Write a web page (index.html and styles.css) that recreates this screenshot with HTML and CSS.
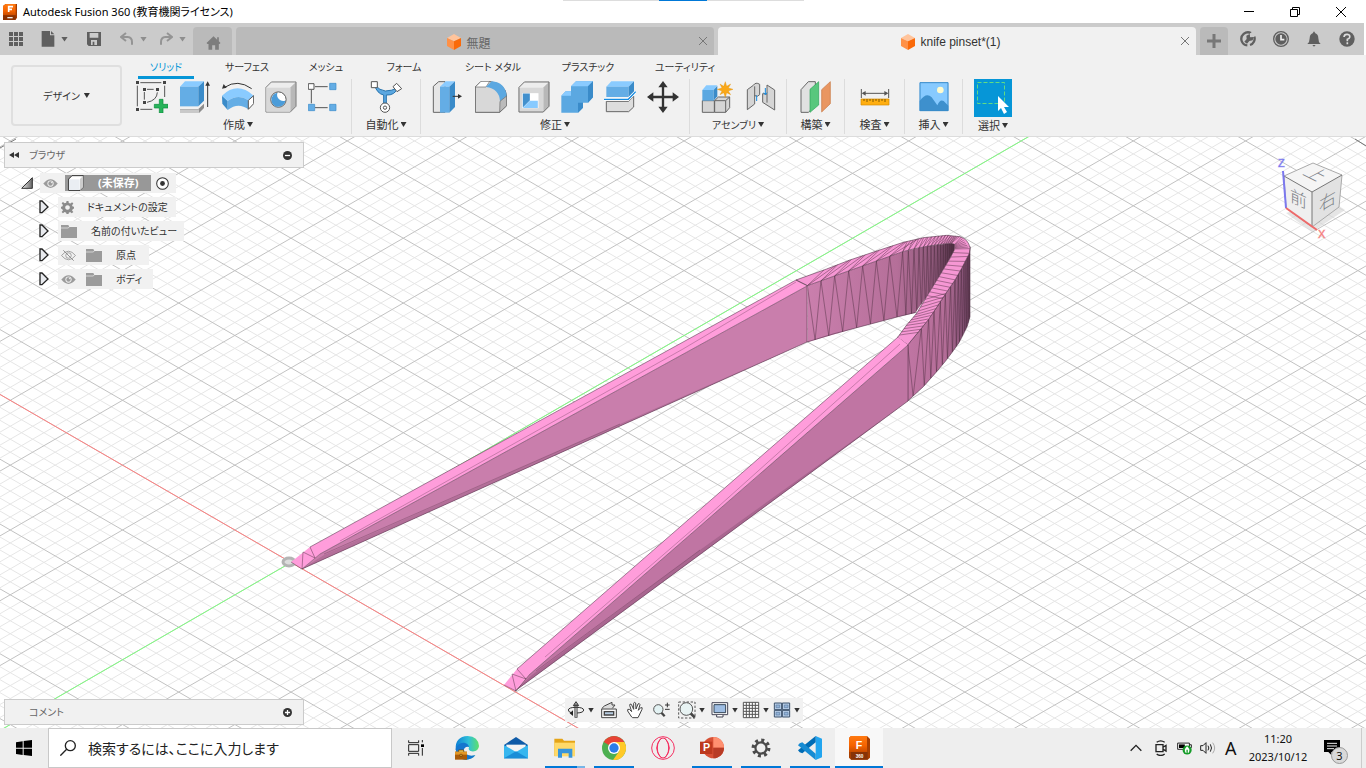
FILE: index.html
```html
<!DOCTYPE html>
<html lang="ja">
<head>
<meta charset="utf-8">
<title>Autodesk Fusion 360</title>
<link rel="stylesheet" href="styles.css">
</head>
<body>
<svg class="defs" aria-hidden="true">
  <defs>
    <linearGradient id="fusion" x1="0" y1="0" x2="0" y2="1"><stop offset="0" stop-color="#ff7a12"/><stop offset=".6" stop-color="#f56300"/><stop offset="1" stop-color="#c84c00"/></linearGradient>
    <linearGradient id="tri" x1="0" y1="0" x2="1" y2="0"><stop offset="0" stop-color="#eee"/><stop offset="1" stop-color="#666"/></linearGradient>
    <linearGradient id="edge" x1="0" y1="0" x2="1" y2="0"><stop offset="0" stop-color="#0c7fd6"/><stop offset=".55" stop-color="#2fc0d8"/><stop offset="1" stop-color="#5fe06a"/></linearGradient>
    <symbol id="doc-cube" viewBox="0 0 42 48"><path d="M21 0 42 12 21 22 0 12Z" fill="#ffc49c"/><path d="M0 12 21 22V48L0 36Z" fill="#ff9147"/><path d="M42 12 21 22V48L42 36Z" fill="#fa6a0a"/></symbol>
    <symbol id="eye" viewBox="0 0 48 30"><path d="M1 15Q24-13 47 15Q24 43 1 15Z" fill="#9b9b9b"/><circle cx="24" cy="15" r="10" fill="#f1f1f1"/><circle cx="24" cy="15" r="7" fill="#9b9b9b"/><circle cx="27" cy="12" r="2" fill="#f1f1f1"/></symbol>
    <symbol id="folder" viewBox="0 0 48 39"><path d="M0 0H22L25 6H48V39H0Z" fill="#9b9b9b"/><path d="M0 9H22L26 4H48" fill="none" stroke="#f1f1f1" stroke-width="2"/></symbol>
    <symbol id="expand" viewBox="0 0 30 40"><path d="M3 2H9L27 20 9 37H3Z" fill="#e8eaee" stroke="#222" stroke-width="4"/></symbol>
    <symbol id="gear" viewBox="0 0 40 40"><path d="M17 0h6l1 6 5 2 5-4 4 4-4 5 2 4 5 1v5l-5 2-2 4 4 5-5 4-5-4-4 2-1 5h-6l-1-5-5-2-5 4-4-4 4-5-2-4-5-2v-5l5-1 2-5-4-5 4-4 5 4 5-2ZM20 13a7 7 0 1 0 .1 0Z" fill="#8b8b8b" fill-rule="evenodd"/></symbol>
  </defs>
</svg>

<header class="titlebar">
  <svg class="applogo" viewBox="0 0 42 48"><path d="M0 6 8 0H42V42L36 48H0Z" fill="#a33b00"/><path d="M8 0H38V34H0V6Z" fill="url(#fusion)"/><path d="M0 34H38V48H0Z" fill="#8b3100"/><path d="M17 24V8H30M17 16H27" fill="none" stroke="#fff" stroke-width="5"/><path d="M13 41H29" stroke="#eee" stroke-width="4"/></svg>
  <h1>Autodesk Fusion 360 (教育機関ライセンス)</h1>
  <div class="grip"></div>
  <div class="wincontrols">
    <button aria-label="最小化"><svg viewBox="0 0 12 12"><path d="M1 5.5H11"/></svg></button>
    <button aria-label="元に戻す"><svg viewBox="0 0 12 12"><path d="M1.500 3.500H8.500V10.500H1.500ZM3.500 3.500V1.500H10.500V8.500H8.500"/></svg></button>
    <button aria-label="閉じる"><svg viewBox="0 0 12 12"><path d="M1 1 11 11M11 1 1 11"/></svg></button>
  </div>
</header>

<div class="tabbar">
  <div class="quick">
    <button class="q-grid" aria-label="データパネル"><svg viewBox="0 0 42 42"><path d="M0 0h12v12H0zM15 0h12v12H15zM30 0h12v12H30zM0 15h12v12H0zM15 15h12v12H15zM30 15h12v12H30zM0 30h12v12H0zM15 30h12v12H15zM30 30h12v12H30z"/></svg></button>
    <button class="q-file" aria-label="ファイル"><svg viewBox="0 0 42 48"><path d="M2 0H27V13H40V47H2ZM30 0 40 10H30Z"/></svg><i class="caret"></i></button>
    <button class="q-save" aria-label="保存"><svg viewBox="0 0 42 42"><path fill-rule="evenodd" d="M0 0H42V42H5L0 37ZM8 3V17H34V3ZM12 24V39H30V24ZM17 29H22V39H17Z"/></svg></button>
    <button class="q-undo dim" aria-label="元に戻す"><svg viewBox="0 0 42 42"><path d="M18 3 3 15 18 27M4 15H23Q36 16 36 30V38" fill="none" stroke="#949494" stroke-width="6"/></svg><i class="caret"></i></button>
    <button class="q-redo dim" aria-label="やり直し"><svg viewBox="0 0 42 42"><path d="M24 3 39 15 24 27M38 15H19Q6 16 6 30V38" fill="none" stroke="#949494" stroke-width="6"/></svg><i class="caret"></i></button>
  </div>
  <button class="hometab" aria-label="ホーム"><svg viewBox="0 0 42 42"><path fill="#7d7d7d" d="M21 1 32 11V4H37V16L42 21 39 24H37V41H26V28H17V41H6V24H3L0 21Z"/></svg></button>
  <div class="doctab"><button class="doctitle"><svg class="cube"><use href="#doc-cube"/></svg>無題</button><button class="x" aria-label="閉じる"><svg viewBox="0 0 10 10"><path d="M1 1 9 9M9 1 1 9"/></svg></button></div>
  <div class="doctab active"><button class="doctitle"><svg class="cube"><use href="#doc-cube"/></svg>knife pinset*(1)</button><button class="x" aria-label="閉じる"><svg viewBox="0 0 10 10"><path d="M1 1 9 9M9 1 1 9"/></svg></button></div>
  <button class="newtab" aria-label="新規"><svg viewBox="0 0 14 14"><path d="M7 0V14M0 7H14" stroke="#777" stroke-width="3"/></svg></button>
  <div class="status">
    <button aria-label="拡張機能"><svg viewBox="0 0 48 48"><path d="M33 6A20 20 0 0 0 5 30Q9 42 22 43M43 17A20 20 0 0 1 30 42" fill="none" stroke="#5f5f5f" stroke-width="7"/><path d="M13 32 20 24 19 14 29 9 31 19 41 18 38 28 28 30 21 38" fill="#5f5f5f"/><path d="M30 6V18L42 18V8Z" fill="#cbcbcb"/></svg></button>
    <button aria-label="ジョブの状態"><svg viewBox="0 0 48 48"><circle cx="24" cy="24" r="22" fill="none" stroke="#5f5f5f" stroke-width="4"/><circle cx="24" cy="24" r="17" fill="#5f5f5f"/><path d="M24 12V26H34" fill="none" stroke="#eee" stroke-width="5"/></svg></button>
    <button aria-label="通知"><svg viewBox="0 0 48 48"><path d="M24 1 28 7Q37 10 37 22 37 34 44 39H4Q11 34 11 22 11 10 20 7ZM19 42H29L24 47Z" fill="#5f5f5f"/></svg></button>
    <button aria-label="ヘルプ"><svg viewBox="0 0 48 48"><circle cx="24" cy="24" r="23" fill="#5f5f5f"/><path d="M15 18Q16 9 25 10 34 11 32 19 31 23 25 25V31M25 34V40" fill="none" stroke="#ddd" stroke-width="5"/></svg></button>
  </div>
</div>

<div class="ribbon">
  <button class="workspace">デザイン<i class="caret"></i></button>
  <div class="ribbonmain">
    <nav class="rtabs">
      <button class="on"><span>ソリッド</span></button><button>サーフェス</button><button>メッシュ</button><button>フォーム</button><button>シート メタル</button><button>プラスチック</button><button>ユーティリティ</button>
    </nav>
    <div class="groups">
      <section class="group g-create">
        <div class="tools">
          <button aria-label="スケッチを作成"><svg viewBox="411 246 96 96"><g fill="none" stroke="#555" stroke-width="3"><path d="M424 251H487M415 260V322M424 331H460M497 260V294M444 271H464M436 279V302M444 310Q474 304 475 280"/></g><path fill="#444" d="M411 246h9v9h-9zM492 246h9v9h-9zM411 327h9v9h-9zM432 267h9v9h-9zM471 267h9v9h-9zM432 306h9v9h-9z"/><path d="M481 301h11v15h15v11h-15v15h-11v-15h-15v-11h15z" fill="#27b35a" stroke="#078b3a" stroke-width="2"/></svg></button>
          <button aria-label="押し出し"><svg viewBox="540 246 96 96"><path d="M543 330H598L615 314V327L600 342H543Z" fill="#8d8d8d"/><path d="M543 331H600V342H543Z" fill="#c9c9c9"/><path d="M543 263 558 247H615L598 263Z" fill="#8acbff"/><path d="M543 263H598V322H543Z" fill="#64ade5"/><path d="M598 263 615 247V305L598 322Z" fill="#3a8bc9"/><path d="M626 324V255" stroke="#333" stroke-width="3"/><path d="M626 247 633 260H619Z" fill="#333"/></svg></button>
          <button aria-label="回転"><svg viewBox="669 246 96 96"><path d="M669 290 686 306V333L670 314Z" fill="#3a8bc9"/><path d="M669 290Q715 246 764 290L748 304Q718 283 686 306Z" fill="#8acbff"/><path d="M686 306Q718 283 748 304V331Q718 308 686 333Z" fill="#64ade5"/><path d="M748 304 764 290V314L748 331Z" fill="#fff" stroke="#555" stroke-width="3"/><path d="M677 265Q716 239 758 269" fill="none" stroke="#333" stroke-width="3"/><path d="M669 269 674 255 683 266Z" fill="#333"/></svg></button>
          <button aria-label="穴"><svg viewBox="796 244 100 100"><path d="M799 264 816 247H893V323L875 341H799Z" fill="#ededed"/><path d="M875 264 893 247V323L875 341Z" fill="#b8b8b8"/><path d="M799 264 816 247H893V323L875 341H799Z" fill="none" stroke="#777" stroke-width="3"/><path d="M800 265H875V340H800Z" fill="#d8d8d8"/><circle cx="838" cy="302" r="24" fill="#fff" stroke="#555" stroke-width="3"/><path d="M835 281A22 22 0 1 0 860 305 19 19 0 0 1 835 281Z" fill="#4b9cd9"/></svg></button>
          <button aria-label="パターン"><svg viewBox="927 246 96 96"><path d="M948 263H986M948 326H986M937 273V313" stroke="#555" stroke-width="3"/><path d="M928 254h17v17h-17z" fill="#fff" stroke="#555" stroke-width="3"/><path d="M992 253h19v19h-19zM992 316h19v19h-19zM928 316h19v19h-19z" fill="#64ade5" stroke="#3a8bc9" stroke-width="2"/></svg></button>
        </div>
        <button class="glabel">作成<i class="caret"></i></button>
      </section>
      <section class="group g-auto">
        <div class="tools"><button aria-label="自動化"><svg viewBox="1108 246 96 96"><path d="M1121 257Q1129 284 1149 288V318H1157V288Q1182 290 1192 266 1173 276 1154 276 1138 275 1121 257Z" fill="#5ba7e0" stroke="#2874ad" stroke-width="3"/><path d="M1112 248h18v18h-18zM1188 253l15 16-14 9-12-15z" fill="#fff" stroke="#555" stroke-width="3"/><circle cx="1153" cy="326" r="14" fill="#fff" stroke="#555" stroke-width="3"/><circle cx="1153" cy="326" r="5" fill="#fff" stroke="#555" stroke-width="3"/></svg></button></div>
        <button class="glabel">自動化<i class="caret"></i></button>
      </section>
      <section class="group g-modify">
        <div class="tools">
          <button aria-label="プレス/プル"><svg viewBox="36 246 96 96"><path d="M40 262 56 248H75V340H40Z" fill="#e6e6e6" stroke="#666" stroke-width="3"/><path d="M60 263 77 247H105L88 263Z" fill="#8acbff"/><path d="M60 263H88V341H60Z" fill="#64ade5"/><path d="M88 263 105 247V324L88 341Z" fill="#3a8bc9"/><path d="M98 292H118" stroke="#333" stroke-width="3"/><path d="M126 292 114 285V299Z" fill="#333"/></svg></button>
          <button aria-label="フィレット"><svg viewBox="165 246 96 96"><path d="M166 264 183 247H207Q258 254 260 292V320L239 340H166Z" fill="#d8d8d8" stroke="#666" stroke-width="3"/><path d="M166 264 183 247H209L198 264Z" fill="#fff" stroke="#666" stroke-width="2"/><path d="M198 264 215 247Q256 250 260 291L240 307Q238 269 198 264Z" fill="#5ba8e1"/><path d="M240 307 260 291V320L239 340Z" fill="#bbb" stroke="#666" stroke-width="2"/></svg></button>
          <button aria-label="シェル"><svg viewBox="292 244 100 100"><path d="M295 264 312 247H389V323L371 341H295Z" fill="#ededed"/><path d="M371 264 389 247V323L371 341Z" fill="#b8b8b8"/><path d="M296 265H371V340H296Z" fill="#d8d8d8"/><path d="M295 264 312 247H389V323L371 341H295Z" fill="none" stroke="#666" stroke-width="3"/><path d="M305 282H356V329H305Z" fill="#fff"/><path d="M307 283H329V305L307 327Z" fill="#4290cd"/><path d="M307 328 329 306H354V328Z" fill="#87caff"/></svg></button>
          <button aria-label="結合"><svg viewBox="423 246 96 96"><path d="M424 290 437 277H453V262L468 247H519V295L504 311H489V326L474 341H424Z" fill="#5ba8e1"/><path d="M424 290 437 277H453V290ZM453 262 468 247H519L504 262Z" fill="#8acbff"/><path d="M504 262 519 247V295L504 311ZM474 311H489V326L474 341Z" fill="#3a8bc9"/></svg></button>
          <button aria-label="分割"><svg viewBox="552 246 96 96"><path d="M559 263 574 247H642L626 263Z" fill="#8acbff"/><path d="M559 263H626V294H559Z" fill="#64ade5"/><path d="M626 263 642 247V278L626 294Z" fill="#3a8bc9"/><path d="M559 307H626L641 291V324L626 338H559Z" fill="#ddd" stroke="#666" stroke-width="3"/><path d="M552 301H625L647 278" fill="none" stroke="#fff" stroke-width="9"/><path d="M552 301H625L647 278" fill="none" stroke="#168be0" stroke-width="4"/></svg></button>
          <button aria-label="移動"><svg viewBox="681 246 96 96"><path d="M729 260V330M695 294H763" stroke="#333" stroke-width="7"/><path d="M729 246 743 265H715ZM729 342 743 323H715ZM681 294 700 280V308ZM777 294 758 280V308Z" fill="#333"/></svg></button>
        </div>
        <button class="glabel">修正<i class="caret"></i></button>
      </section>
      <section class="group g-asm">
        <div class="tools">
          <button aria-label="新規コンポーネント"><svg viewBox="840 246 96 96"><path d="M844 305H880V340H844ZM881 305 892 294H926V326L914 340H881Z" fill="#d5d5d5" stroke="#666" stroke-width="3"/><path d="M881 305H914L926 294M914 305V340" fill="none" stroke="#666" stroke-width="3"/><path d="M844 273 856 259H889L878 273Z" fill="#87caff"/><path d="M844 273H878V305H844Z" fill="#5ba8e1"/><path d="M878 273 889 260V292L878 305Z" fill="#3a8bc9"/><path d="m913 248 4 14 12-7-7 12 14 4-14 5 7 11-12-6-4 14-5-14-11 6 6-11-14-5 14-4-6-12 11 7Z" fill="#faa818" stroke="#dd8d00"/></svg></button>
          <button aria-label="ジョイント"><svg viewBox="969 246 96 96"><path d="M979 272 997 259Q1004 248 1016 256V287Q1010 295 1001 290V315L979 332ZM1025 284 1038 285V258L1061 273V333L1025 310Z" fill="#d5d5d5" stroke="#666" stroke-width="3"/><path d="M1001 262V291M1038 285V311" stroke="#666" stroke-width="3"/><path d="M1007 289V306M1033 267V286M1028 281 1033 287 1038 281" fill="none" stroke="#168be0" stroke-width="3"/></svg></button>
        </div>
        <button class="glabel">アセンブリ<i class="caret"></i></button>
      </section>
      <section class="group g-con"><div class="tools"><button aria-label="オフセット平面"><svg viewBox="0 0 96 96"><path d="M3 26 25 2H46V75L25 94H3Z" fill="#e1e1e1" stroke="#666" stroke-width="3"/><path d="M30 25 56 2V72L30 94Z" fill="#58c77d" stroke="#2ba557" stroke-width="2"/><path d="M65 26 91 2V68L65 93Z" fill="#e99661" stroke="#c77440" stroke-width="2"/></svg></button></div><button class="glabel">構築<i class="caret"></i></button></section>
      <section class="group g-ins"><div class="tools"><button aria-label="計測"><svg viewBox="0 0 96 96"><path d="M7 24V51M89 24V51M12 37H84" stroke="#555" stroke-width="3"/><path d="M8 37 20 30V44ZM88 37 76 30V44Z" fill="#555"/><path d="M6 54H90V72H6Z" fill="#ffae10" stroke="#d68b00" stroke-width="2"/><path d="M15 54v6M24 54v9M33 54v6M42 54v9M51 54v6M60 54v9M69 54v6M78 54v9" stroke="#805900" stroke-width="3"/></svg></button></div><button class="glabel">検査<i class="caret"></i></button></section>
      <section class="group g-imp"><div class="tools"><button aria-label="挿入"><svg viewBox="0 0 96 96"><path d="M5 4H91V90H5Z" fill="#87caff"/><path d="M5 60Q25 32 41 49L58 73Q66 53 77 60L91 74V90H5Z" fill="#3e90cd"/><path d="M6 5H90V89H6Z" fill="none" stroke="#3a8bc9" stroke-width="3"/><circle cx="67" cy="27" r="10" fill="#fffbce"/></svg></button></div><button class="glabel">挿入<i class="caret"></i></button></section>
      <section class="group g-sel"><div class="tools"><button class="selbtn" aria-label="選択"><svg viewBox="0 0 38 38"><path d="M3.500 3.500H30.500V24.500H3.500Z" fill="none" stroke="#62dc83" stroke-dasharray="4 2"/><path d="M24 17V32L27 29 30 35 33 33 30 28H35Z" fill="#fff"/></svg></button></div><button class="glabel">選択<i class="caret"></i></button></section>
    </div>
  </div>
</div>

<main class="viewport">
  <svg class="scene" viewBox="0 137 1366 591" preserveAspectRatio="xMidYMid slice" role="img" aria-label="3D モデル">
    <defs>
      <linearGradient id="innerwall" gradientUnits="userSpaceOnUse" x1="142" y1="0" x2="590" y2="0"><stop offset="0" stop-color="#ca7fad"/><stop offset=".6" stop-color="#b56f99"/><stop offset=".85" stop-color="#8c5778"/><stop offset="1" stop-color="#4b2e41"/></linearGradient>
      <linearGradient id="outerwall" gradientUnits="userSpaceOnUse" x1="443" y1="0" x2="630" y2="0"><stop offset="0" stop-color="#c075a3"/><stop offset=".6" stop-color="#b36d97"/><stop offset="1" stop-color="#76496a"/></linearGradient>
      <clipPath id="innerclip"><path d="M142 197 428 95 500 79 575 70 584 73 583 90 570 115 540 165 500 230 465 279 410 292 280 326 142 367Z"/></clipPath>
      <clipPath id="outerclip"><path d="M443 375 484 325 530 262 561 215 585 180 605 145 628 100 630 80V290L622 318 610 343 597 368 580 392 556 424 530 455 490 500 443 543Z"/></clipPath>
    </defs>
    <path id="minor" class="minor"/>
    <path id="major" class="major"/>
    <path d="M1355 139 1366 146M0 148 16 139" stroke="#777"/>
    <path d="M-10 388.700 590 735" class="xaxis"/>
    <path d="M-10 736.300 1040 130.100" class="yaxis"/>
    <ellipse cx="289" cy="562" rx="6" ry="4" fill="#ddd" stroke="#b4b4b4" stroke-width="3"/>
    <g class="model">
      <path d="M302 569 320 554 807 286V342Z" fill="#c97eac"/>
      <path d="M302 569 324 555 620 424 807 342Z" fill="#b36f99"/>
      <path d="M291 562 310 547 796 280 807 286 320 554 302 569Z" fill="#ff9ddb"/>
      <path d="M340 541 683 349 796 282M324 554 620 424" class="seam"/>
      <path d="M291 562 302 569 320 554M302 569 303 552 315 558 310 547" class="edge"/>
      <g transform="translate(760 220) scale(.33333)">
        <path d="M142 197 428 95 500 79 575 70 584 73 583 90 570 115 540 165 500 230 465 279 410 292 280 326 142 367Z" fill="url(#innerwall)"/>
        <path id="innerlines" class="edge" clip-path="url(#innerclip)"/>
        <path d="M443 375 484 325 530 262 561 215 585 180 605 145 628 100 630 80V290L622 318 610 343 597 368 580 392 556 424 530 455 490 500 443 543Z" fill="url(#outerwall)" class="rim"/>
        <path id="outerlines" class="edge" clip-path="url(#outerclip)"/>
        <path d="M108 180 200 147 270 120 350 93 430 67 490 53 560 46 600 50Q625 58 630 83L628 100 605 145 585 180 561 215 530 262 506 298 484 325 443 375 413 352 440 315 470 280 500 230 540 165 570 115 583 90 584 73 575 70 540 73 500 79 460 87 428 95 142 197Z" fill="#f697d4" class="rim"/>
        <path id="bandlines" class="edge"/>
      </g>
      <path d="M515 691 529 675 908 345V401Z" fill="#c075a3"/>
      <path d="M515 691 532 675 700 550 908 401Z" fill="#a96690"/>
      <path d="M504 685 517 669 898 337 908 345 529 675 515 691Z" fill="#ff9ddb"/>
      <path d="M545 657 700 523 900 344M536 671 700 550" class="seam"/>
      <path d="M504 685 516 691 529 675M516 691 512 674 526 679 517 669" class="edge"/>
      <path d="M302 569 807 342 833 334 897 317 917 312M515 691 908 401M310 547 796 280M517 669 898 337M320 554 807 286V342M529 675 908 345V401" class="outline"/>
    </g>
  </svg>

  <aside class="browser">
    <div class="panelhead"><svg class="rew" viewBox="0 0 30 18"><path d="M15 0V18L0 9ZM30 0V18L15 9Z"/></svg><h2>ブラウザ</h2><button aria-label="閉じる"><svg viewBox="0 0 28 28"><circle cx="14" cy="14" r="14"/><path d="M6 14H22" stroke="#fff" stroke-width="4"/></svg></button></div>
    <ul class="tree">
      <li class="root"><svg class="tri" viewBox="0 0 36 36"><path d="M2 34 34 2V34Z" fill="url(#tri)" stroke="#333" stroke-width="3"/></svg>
        <div class="node"><svg class="eye"><use href="#eye"/></svg><span class="sel"><svg viewBox="0 0 48 48"><path d="M2 12 12 2H46V36L36 46H2Z" fill="#fff" stroke="#333" stroke-width="3"/><path d="M36 12 46 2V36L36 46Z" fill="#ccc"/><path d="M3 13H35V45H3Z" fill="#eaeef3"/></svg>(未保存)</span><svg class="radio" viewBox="0 0 38 38"><circle cx="19" cy="19" r="17" fill="#fff" stroke="#333" stroke-width="3"/><circle cx="19" cy="19" r="7" fill="#333"/></svg></div></li>
      <li><svg class="exp"><use href="#expand"/></svg><div class="node n2"><svg class="gear"><use href="#gear"/></svg>ドキュメントの設定</div></li>
      <li><svg class="exp"><use href="#expand"/></svg><div class="node n3"><svg class="folder"><use href="#folder"/></svg>名前の付いたビュー</div></li>
      <li><svg class="exp"><use href="#expand"/></svg><div class="node n4"><svg class="eye" viewBox="0 0 48 36"><path d="M1 18Q24-10 47 18Q24 46 1 18Z" fill="none" stroke="#9b9b9b" stroke-width="3"/><circle cx="24" cy="18" r="9" fill="none" stroke="#9b9b9b" stroke-width="3"/><path d="M7 1 41 35" stroke="#888" stroke-width="3"/></svg><svg class="folder"><use href="#folder"/></svg>原点</div></li>
      <li><svg class="exp"><use href="#expand"/></svg><div class="node n5"><svg class="eye"><use href="#eye"/></svg><svg class="folder"><use href="#folder"/></svg>ボディ</div></li>
    </ul>
  </aside>

  <svg class="viewcube" viewBox="1272 152 74 92" role="img" aria-label="ビューキューブ">
    <path d="M1286 213 1312 232 1345 210 1330 200Z" fill="#ccc" opacity=".5"/>
    <path d="M1284 176 1313 163 1342 175 1312 192Z" fill="#f5f5f5"/><path d="M1284 176 1312 192V227L1286 208Z" fill="#efefef"/><path d="M1342 175 1312 192V227L1339 207Z" fill="#e2e2e2"/>
    <path d="M1284 176 1313 163 1342 175 1339 207 1312 227 1286 208Z" fill="none" stroke="#aaa"/><path d="M1284 176 1312 192 1342 175M1312 192V227" fill="none" stroke="#777"/>
    <text class="face" transform="translate(1290 201) skewY(25)">前</text><text class="face" transform="translate(1319 212) skewY(-30)">右</text><text class="face" transform="translate(1302 174) rotate(27) skewX(-35)">上</text>
    <path d="M1283 171 1286 208" stroke="#7b78ee" stroke-width="2"/><path d="M1286 208 1317 230" stroke="#ee6a6a" stroke-width="2"/>
    <text x="1278" y="167" class="axis z">Z</text><text x="1318" y="238" class="axis x">X</text>
  </svg>

  <div class="comments panelhead"><h2>コメント</h2><button aria-label="追加"><svg viewBox="0 0 28 28"><circle cx="14" cy="14" r="14"/><path d="M6 14H22M14 6V22" stroke="#fff" stroke-width="4"/></svg></button></div>

  <div class="navbar">
    <button class="wide" aria-label="オービット"><svg viewBox="0 0 54 54"><path d="M27 8V50" stroke="#333" stroke-width="9"/><path d="M27 10V48" stroke="#fff" stroke-width="3"/><path d="M27 2 35 14H19ZM16 36Q4 34 4 27 5 19 27 19 49 19 50 27 50 35 30 36" fill="none" stroke="#333" stroke-width="3"/><path d="M8 37 18 28V45Z" fill="#222"/></svg><i class="caret"></i></button>
    <button aria-label="ビュー正面"><svg viewBox="0 0 54 54"><path d="M5 23 13 15 36 4V12H45L37 22" fill="#ddd" stroke="#444" stroke-width="3"/><path d="M5 24H49V50H5Z" fill="#f8f8f8" stroke="#444" stroke-width="3"/><path d="M13 32H41V42H13Z" fill="#b6cbe0" stroke="#444" stroke-width="4"/></svg></button>
    <button aria-label="画面移動"><svg viewBox="0 0 54 54"><path d="M17 48 5 30Q3 23 10 25L17 32 11 13Q11 7 16 10L23 25V7Q25 1 29 6L30 24 36 9Q40 5 42 11L37 28 44 20Q51 18 48 25L40 42 36 50H20Z" fill="#fff" stroke="#444" stroke-width="3"/></svg></button>
    <button aria-label="ズーム"><svg viewBox="0 0 54 54"><path d="M27 34 38 46" stroke="#444" stroke-width="7"/><circle cx="19" cy="25" r="14" fill="#e3f2f3" stroke="#555" stroke-width="3"/><path d="M39 12H53M46 5V19M39 25H53" stroke="#333" stroke-width="3"/></svg></button>
    <button class="wide" aria-label="フィット"><svg viewBox="0 0 54 54"><path d="M2 3H51V51H2Z" fill="none" stroke="#555" stroke-width="3" stroke-dasharray="7 5"/><path d="M37 36 50 49" stroke="#444" stroke-width="8"/><circle cx="25" cy="24" r="19" fill="#e8f3f3" stroke="#555" stroke-width="3"/></svg><i class="caret"></i></button>
    <button aria-label="表示設定"><svg viewBox="0 0 54 54"><path d="M3 5H50V41H3Z" fill="#fff" stroke="#445" stroke-width="3"/><path d="M9 11H44V35H9Z" fill="#9ebde3" stroke="#345" stroke-width="3"/><path d="M17 42V48H36V42" fill="#fff" stroke="#445" stroke-width="3"/></svg><i class="caret"></i></button>
    <button aria-label="グリッド"><svg viewBox="0 0 54 54"><path d="M4 4H50V50H4ZM13 4V50M22 4V50M31 4V50M40 4V50M4 13H50M4 22H50M4 31H50M4 40H50" fill="#fff" stroke="#555" stroke-width="3"/></svg><i class="caret"></i></button>
    <button aria-label="ビューポート"><svg viewBox="0 0 54 54"><path d="M4 6H26V26H4ZM28 6H50V26H28ZM4 28H26V48H4ZM28 28H50V48H28Z" fill="#b8cee8" stroke="#3d526d" stroke-width="3"/><path d="M9 12h11v8H9zM34 12h11v8H34zM9 34h11v8H9zM34 34h11v8H34z" fill="#93b4da" stroke="#5f7da2" stroke-width="2"/></svg><i class="caret"></i></button>
  </div>
</main>

<footer class="taskbar">
  <button class="start" aria-label="スタート"><svg viewBox="0 0 48 48"><path d="M0 7 20 4V23H0ZM23 3 48 0V23H23ZM0 26H20V45L0 42ZM23 26H48V48L23 45Z"/></svg></button>
  <label class="search"><svg viewBox="0 0 48 48"><circle cx="31" cy="17" r="15" fill="none" stroke="#222" stroke-width="4"/><path d="M20 28 1 47" stroke="#222" stroke-width="4"/></svg><input type="text" placeholder="検索するには、ここに入力します" aria-label="検索"></label>
  <div class="apps">
    <button aria-label="タスクビュー"><svg class="small" viewBox="0 0 48 48"><path d="M2 1V8H32V1M2 47V40H32V47M2 14H32V34H2ZM43 0V7M43 24V47" fill="none" stroke="#222" stroke-width="3"/><path d="M39 13h9v8h-9z"/></svg></button>
    <button aria-label="Edge"><svg viewBox="0 0 72 72"><path d="M2 40Q0 2 38 0 70 2 72 30 70 48 50 46 38 43 42 34 30 21 23 40 30 66 61 58 48 72 31 71 6 68 2 40Z" fill="url(#edge)"/><path d="M2 40Q8 19 27 20 39 21 42 33 29 30 26 43 33 64 61 58 49 72 31 71 5 68 2 40Z" fill="#1476ce"/><path d="M0 47H36V71H0Z" fill="#aa5b08"/><path d="M0 47H36V56H0Z" fill="#e29726"/><path d="M11 47V42H26V47M15 55H21V61H15Z" fill="#f8c541" stroke="#6b3a05" stroke-width="2"/></svg></button>
    <button aria-label="メール"><svg viewBox="0 0 72 72"><path d="M0 27 36 3 72 27V67H0Z" fill="#0f5ba8"/><path d="M7 26H65V53H7Z" fill="#f4f4f4"/><path d="M0 27 36 48 72 27V67H0Z" fill="#36b6ef"/><path d="M0 67 36 46 72 67Z" fill="#198dd7"/></svg></button>
    <button class="run multi" aria-label="エクスプローラー"><svg viewBox="0 0 72 72"><path d="M4 8H28L33 14H66V60H4Z" fill="#e5a417"/><path d="M4 20H66V61H4Z" fill="#ffd968"/><path d="M15 38H58V65H47V52H27V65H15Z" fill="#3695dc"/></svg></button>
    <button class="run" aria-label="Chrome"><svg viewBox="0 0 72 72"><circle cx="36" cy="36" r="36" fill="#4caf50"/><path d="M36 36 5 18A36 36 0 0 1 67 18Z" fill="#e74335"/><path d="M36 18H67A36 36 0 0 1 33 72L52 45Z" fill="#ffc928"/><circle cx="36" cy="36" r="18" fill="#fff"/><circle cx="36" cy="36" r="14" fill="#2b7de9"/></svg></button>
    <button aria-label="Opera GX"><svg viewBox="0 0 72 72"><g fill="none" stroke="#f52f61" stroke-width="3"><circle cx="36" cy="36" r="34"/><ellipse cx="36" cy="36" rx="17" ry="30"/><path d="M42 7Q68 36 42 65M30 7Q4 36 30 65"/></g></svg></button>
    <button class="run" aria-label="PowerPoint"><svg viewBox="0 0 72 72"><circle cx="40" cy="35" r="32" fill="#d75035"/><path d="M40 3A32 32 0 0 1 72 35H40Z" fill="#ff9070"/><path d="M72 35A32 32 0 0 1 40 67V35Z" fill="#b83b25"/><path d="M0 17H37V54H0Z" fill="#bd391e"/><text x="9" y="46" class="letter">P</text></svg></button>
    <button class="run" aria-label="設定"><svg class="mid" viewBox="0 0 54 54"><circle cx="27" cy="27" r="15" fill="none" stroke="#4a4a4a" stroke-width="6"/><circle cx="27" cy="27" r="21" fill="none" stroke="#4a4a4a" stroke-width="9" stroke-dasharray="8 8.490"/></svg></button>
    <button class="run" aria-label="Visual Studio Code"><svg viewBox="0 0 72 72"><path d="M53 0 72 8V64L53 72Z" fill="#22a5ef"/><path d="M53 0V19L13 52 5 49 0 43 53 0" fill="#006cb5"/><path d="M53 72V53L13 19 5 22 0 28 53 72" fill="#168bd3"/></svg></button>
    <button class="run current" aria-label="Fusion 360"><svg viewBox="0 0 72 72"><path d="M6 6 12 0H60L69 9V65L62 71H12L6 65Z" fill="#a93f00"/><path d="M12 0H60V48H6V6Z" fill="url(#fusion)"/><path d="M12 48H62V71H12Z" fill="#873307"/><text x="26" y="38" class="letter">F</text><text x="26" y="65" class="tiny">360</text></svg></button>
  </div>
  <div class="tray">
    <svg class="t-chev" viewBox="0 0 36 24"><path d="M2 20 18 4 34 20" fill="none" stroke="#222" stroke-width="4"/></svg>
    <svg class="t-meet" viewBox="0 0 36 48"><path d="M3 14H24V35H3ZM25 21 33 16V33L25 28M5 7Q17-2 29 7M5 42Q17 51 29 42" fill="none" stroke="#222" stroke-width="4"/></svg>
    <svg class="t-batt" viewBox="0 0 46 42"><path d="M2 6H38V25H2ZM39 11H44V20H39" fill="#fff" stroke="#222" stroke-width="3"/><path d="M6 10H24V21H6Z"/><circle cx="31" cy="27" r="14" fill="#159c28"/><path d="M31 16Q43 26 35 36H27Q19 26 31 16" fill="#fff"/><path d="M31 36V26" stroke="#159c28" stroke-width="4"/></svg>
    <svg class="t-vol" viewBox="0 0 48 42"><path d="M2 14H9L18 5V37L9 28H2ZM24 14Q29 21 24 28M31 10Q38 21 31 32" fill="none" stroke="#222" stroke-width="3"/><path d="M38 5Q50 21 38 37" fill="none" stroke="#aaa" stroke-width="3"/></svg>
    <span class="ime">A</span>
    <time class="clock" datetime="2023-10-12T11:20"><span>11:20</span><span>2023/10/12</span></time>
    <button class="notice" aria-label="通知 3"><svg viewBox="0 0 48 48"><path d="M0 0H48V36H22V45L13 36H0Z"/><path d="M9 10H39M9 18H39M9 26H30" stroke="#eee" stroke-width="3"/></svg><span>3</span></button>
  </div>
</footer>
<script src="script.js"></script>
</body>
</html>
```
FILE: styles.css
```css
* { box-sizing: border-box; }
html { height: 100%; }
body { margin: 0; min-height: 100%; display: flex; flex-direction: column; background: #fff; color: #333; font: 11px/16px "Noto Sans", "Noto Sans CJK JP", sans-serif; font-feature-settings: "palt"; overflow: hidden; }
button { border: 0; padding: 0; background: none; font: inherit; color: inherit; font-feature-settings: inherit; display: flex; align-items: center; justify-content: center; white-space: nowrap; }
h1, h2 { margin: 0; font: inherit; }
ul { list-style: none; margin: 0; padding: 0; }
svg { display: block; flex: none; }
.defs { position: absolute; width: 0; height: 0; }
.caret { flex: none; width: 7px; height: 5px; background: currentColor; clip-path: polygon(0 0, 100% 0, 50% 100%); }

.titlebar { position: relative; height: 23px; display: flex; align-items: center; padding: 0 12px 0 3px; color: #000; }
.titlebar h1 { margin-left: 6px; flex: 1; }
.applogo { width: 14px; height: 16px; }
.grip { position: absolute; top: 0; left: 563px; width: 241px; height: 1px; background: linear-gradient(90deg, #ddd 96px, #0078d7 96px, #0078d7 144px, #ddd 144px); }
.wincontrols { display: flex; gap: 20px; }
.wincontrols button { width: 26px; height: 20px; }
.wincontrols svg { width: 12px; height: 12px; fill: none; stroke: #000; }

.tabbar { height: 32px; margin-right: 2px; padding-top: 4px; display: flex; gap: 4px; background: #cbcbcb; }
.quick { width: 189px; display: flex; align-items: center; padding: 0 0 4px 9px; fill: #5f5f5f; color: #5f5f5f; }
.quick svg { width: 14px; height: 14px; }
.quick .q-file svg { height: 16px; }
.quick button { gap: 6px; }
.q-file { margin-left: 18px; }
.q-save { margin-left: 19px; }
.q-undo { margin-left: 19px; }
.q-redo { margin-left: 12px; }
.dim { color: #8e8e8e; }
.hometab { width: 39px; background: #bababa; border-radius: 4px 4px 0 0; }
.hometab svg { width: 15px; height: 14px; margin: 3px 0 0 2px; }
.doctab { flex: 1; display: flex; background: #bababa; color: #666; border-radius: 4px 4px 0 0; padding: 0 6px 0 4px; }
.doctab.active { background: #f1f1f1; color: #333; }
.doctitle { flex: 1; gap: 5px; font: 12px "Liberation Sans", "Noto Sans CJK JP", sans-serif; padding-top: 2px; }
.cube { width: 14px; height: 16px; }
.x svg { width: 10px; height: 10px; stroke: #777; stroke-width: 1; }
.newtab { width: 28px; background: #bababa; border-radius: 4px 4px 0 0; }
.newtab svg { width: 14px; height: 14px; }
.status { width: 132px; display: flex; gap: 17px; padding: 0 0 4px 8px; }
.status svg { width: 16px; height: 16px; }

.ribbon { height: 82px; display: flex; background: #f1f1f1; border-bottom: 1px solid #dcdcdc; }
.workspace { width: 111px; height: 61px; margin: 10px 4px 0 11px; border: 2px solid #dfdfdf; border-radius: 4px; gap: 4px; font-size: 10px; }
.rtabs { display: grid; grid-template-columns: 80px 82px 76px 80px 98px 92px 102px; height: 24px; font-size: 10px; }
.rtabs .on { color: #0696d7; }
.rtabs .on span { width: 56px; height: 24px; padding-top: 4px; border-bottom: 3px solid #0696d7; }
.groups { display: flex; padding-left: 5px; }
.group { height: 55px; display: flex; flex-direction: column; align-items: center; border-right: 1px solid #dcdcdc; }
.group:last-child { border: 0; }
.tools { height: 38px; display: flex; align-items: center; gap: 11px; }
.tools svg { width: 32px; height: 32px; }
.glabel { height: 20px; gap: 2px; }
.glabel .caret, .workspace .caret { width: 6px; }
.g-create { width: 221px; padding-right: 6px; }
.g-auto { width: 69px; }
.g-modify { width: 269px; }
.g-asm { width: 97px; }
.g-asm .glabel { font-size: 10px; }
.g-con { width: 58px; }
.g-ins { width: 60px; }
.g-imp { width: 58px; }
.g-sel { width: 60px; }
.selbtn { width: 38px; height: 38px; background: #0696d7; }
.selbtn svg { width: 38px; height: 38px; }

.viewport { position: relative; flex: 1; min-height: 300px; overflow: hidden; background: #fff; }
.scene { position: absolute; inset: 0; width: 100%; height: 100%; }
.minor { fill: none; stroke: #e6e6e6; stroke-width: 1; }
.major { fill: none; stroke: #c2c2c2; stroke-width: 1; }
.xaxis { stroke: #ff8080; stroke-width: 1; }
.yaxis { stroke: #80ff80; stroke-width: 1; }
.model path { vector-effect: non-scaling-stroke; }
.edge { fill: none; stroke: #4b2c3f; stroke-opacity: .45; stroke-width: 1; }
.seam { fill: none; stroke: #4b2c3f; stroke-opacity: .3; stroke-width: 1; }
.outline { fill: none; stroke: #54344a; stroke-opacity: .55; stroke-width: 1; }
.rim { stroke: #54344a; stroke-opacity: .6; stroke-width: 1; }

.browser { position: absolute; top: 5px; left: 4px; width: 300px; }
.panelhead { height: 26px; display: flex; align-items: center; background: #f1f1f1; border: 1px solid #cbcbcb; padding: 0 11px 0 4px; color: #666; font-size: 10px; }
.panelhead h2 { flex: 1; margin-left: 10px; }
.rew { width: 10px; height: 6px; fill: #333; }
.panelhead button svg { width: 9px; height: 9px; fill: #333; }
.tree { padding-top: 3px; font-size: 10px; white-space: nowrap; }
.tree li { height: 24px; display: flex; align-items: center; padding-left: 35px; }
.tree li.root { padding-left: 17px; font-size: 11px; }
.tri { width: 12px; height: 12px; margin-right: 7px; }
.exp { width: 10px; height: 14px; margin-right: 9px; }
.node { height: 20px; display: flex; align-items: center; background: #f1f1f1; padding-left: 3px; }
.root .node { width: 136px; padding-left: 3px; }
.eye { width: 15px; height: 11px; }
.sel { width: 86px; height: 16px; margin: 0 5px 0 7px; display: flex; align-items: center; gap: 14px; padding-left: 3px; background: #989898; color: #fff; font-weight: 700; }
.sel svg { width: 16px; height: 16px; }
.radio { width: 13px; height: 13px; }
.gear { width: 13px; height: 13px; margin-right: 13px; }
.folder { width: 16px; height: 13px; margin-right: 14px; }
.eye + .folder { margin-left: 10px; }
.n2 { width: 118px; }
.n3 { width: 126px; }
.n4 { width: 91px; }
.n5 { width: 95px; }
.viewcube { position: absolute; top: 15px; right: 20px; width: 74px; height: 92px; }
.face { font: 300 17px "Noto Sans CJK JP", sans-serif; fill: #7d8288; }
.axis { font: 11px "Liberation Sans", sans-serif; }
.axis.z { fill: #7b78ee; stroke: #7b78ee; stroke-opacity: .4; }
.axis.x { fill: #f47b7b; stroke: #f47b7b; stroke-opacity: .4; }
.comments { position: absolute; left: 4px; bottom: 3px; width: 300px; padding-left: 14px; }
.navbar { position: absolute; left: 565px; bottom: 6px; height: 24px; display: flex; align-items: center; gap: 8px; padding: 0 3px 0 2px; background: #f1f1f1; }
.navbar svg { width: 18px; height: 18px; }
.navbar button { gap: 3px; }
.navbar .caret { width: 6px; margin-right: -4px; }
.navbar .wide .caret { margin-right: -2px; }
.navbar button:last-child .caret { margin-right: 0; }

.taskbar { height: 40px; display: flex; background: #eee; color: #111; }
.start { width: 48px; }
.start svg { width: 16px; height: 16px; }
.search { width: 344px; height: 40px; display: flex; align-items: center; gap: 12px; padding: 0 11px; background: #fff; border: 1px solid #c8c8c8; }
.search svg { width: 16px; height: 16px; }
.search input { flex: 1; border: 0; outline: 0; padding: 0; background: none; font: 14px "Noto Sans CJK JP", sans-serif; font-feature-settings: inherit; }
.search input::placeholder { color: #222; opacity: 1; }
.apps { display: flex; gap: 1px; }
.apps button { position: relative; width: 48px; height: 40px; }
.apps button:nth-child(1) { margin-right: 2px; }
.apps svg { width: 24px; height: 24px; }
.apps .small { width: 16px; height: 16px; }
.apps .mid { width: 20px; height: 20px; }
.run::after { content: ""; position: absolute; left: 4px; right: 4px; bottom: 0; height: 2px; background: #0078d7; }
.run.multi::after { background: linear-gradient(90deg, #0078d7 80%, #76b5e7 80%); }
.run.current { background: #f8f8f8; }
.run.current::after { left: 0; right: 0; }
.letter { font: 700 32px "Liberation Sans", sans-serif; fill: #fff; }
.tiny { font: 700 14px "Liberation Sans", sans-serif; fill: #fff; }
.tray { flex: 1; display: flex; align-items: center; justify-content: flex-end; margin-right: 4px; padding-right: 13px; border-right: 1px solid #ccc; }
.t-chev { width: 12px; height: 8px; margin-right: 13px; }
.t-meet { width: 12px; height: 16px; margin-right: 10px; }
.t-batt { width: 15px; height: 14px; margin-right: 8px; }
.t-vol { width: 16px; height: 14px; margin-right: 9px; }
.ime { width: 12px; font-size: 18px; }
.clock { width: 82px; margin-right: 5px; display: flex; flex-direction: column; align-items: center; line-height: 18px; }
.notice { position: relative; width: 24px; height: 24px; justify-content: flex-start; align-items: flex-start; }
.notice svg { width: 16px; height: 16px; margin-top: 4px; }
.notice span { position: absolute; right: 0; bottom: -4px; width: 17px; height: 17px; border: 1px solid #999; border-radius: 50%; background: #d9d9d9; line-height: 15px; text-align: center; }
```
FILE: script.js
```js
// Isometric ground grid: major cells are split into five minor ones.
const originX = 291, originY = 562.4, slope = 0.57735, step = 64.84;
let major = "", minor = "";
for (let i = -100; i <= 100; i++) {
  const offset = originY + i * step / 5;
  const down = offset - originX * slope;
  const up = offset + originX * slope;
  const lines = `M0 ${down}L1366 ${down + 1366 * slope}M0 ${up}L1366 ${up - 1366 * slope}`;
  if (i % 5 === 0) major += lines; else minor += lines;
}
document.getElementById("major").setAttribute("d", major);
document.getElementById("minor").setAttribute("d", minor);

// Height of a polyline at a given x.
function heightAt(points, x) {
  for (let i = 1; i < points.length; i++) {
    const [ax, ay] = points[i - 1], [bx, by] = points[i];
    if (x <= bx) return ay + (by - ay) * (x - ax) / (bx - ax);
  }
  return points[points.length - 1][1];
}
// Triangulated strip between a top and a bottom polyline.
function zigzag(xs, top, bottom, lean) {
  return xs.map((x, i) => {
    const next = xs[i + 1] ?? x + 3;
    const bx = x + (next - x) * lean;
    return `M${x} ${heightAt(top, x)}L${bx} ${heightAt(bottom, bx)}L${next} ${heightAt(top, next)}`;
  }).join("");
}
const innerTop = [[142, 197], [428, 95], [500, 79], [575, 70], [584, 73]];
const innerBottom = [[142, 367], [280, 326], [410, 292], [465, 279], [590, 255]];
const innerX = [142, 183, 224, 266, 308, 349, 389, 428, 445, 462, 477, 490, 502, 513, 523, 533, 542, 550, 557, 563, 569, 574, 579];
document.getElementById("innerlines").setAttribute("d", zigzag(innerX, innerTop, innerBottom, 0.57));

const outerTop = [[443, 375], [484, 325], [530, 262], [561, 215], [585, 180], [605, 145], [628, 100], [630, 80]];
const outerBottom = [[443, 543], [490, 500], [530, 455], [556, 424], [580, 392], [597, 368], [610, 343], [622, 318], [630, 290]];
const outerX = [443, 484, 506, 522, 541, 556, 572, 585, 595, 604, 612, 618, 623, 627];
document.getElementById("outerlines").setAttribute("d", zigzag(outerX, outerTop, outerBottom, 0.4));

// Facets across the top band.
const rimBack = [[108, 180], [200, 147], [270, 120], [350, 93], [430, 67], [490, 53], [560, 46], [600, 50]];
let band = "M108 180L142 197M413 352L443 375";
innerX.forEach((x, i) => {
  if (x > 575) return;
  const lean = x < 420 ? 50 : 14;
  const y = heightAt(innerTop, x);
  band += `M${x} ${y}L${x + lean} ${heightAt(rimBack, x + lean)}`;
  band += `M${x} ${y}L${x + lean * 1.7} ${heightAt(rimBack, x + lean * 1.7)}`;
});
const rimLeft = [[413, 352], [440, 315], [470, 280], [500, 230], [540, 165], [570, 115], [583, 90]];
for (let t = 0; t < 24; t++) {
  const x = 418 + t * 7, rx = Math.min(450 + t * 7.6 + (t < 12 ? 24 : 6), 628);
  band += `M${x} ${heightAt(rimLeft, x)}L${rx} ${heightAt(outerTop, rx)}`;
}
for (let t = 0; t < 8; t++) {
  band += `M584 ${73 + t * 2}L${604 + t * 3.5} ${51 + t * 5}`;
}
document.getElementById("bandlines").setAttribute("d", band);
```
